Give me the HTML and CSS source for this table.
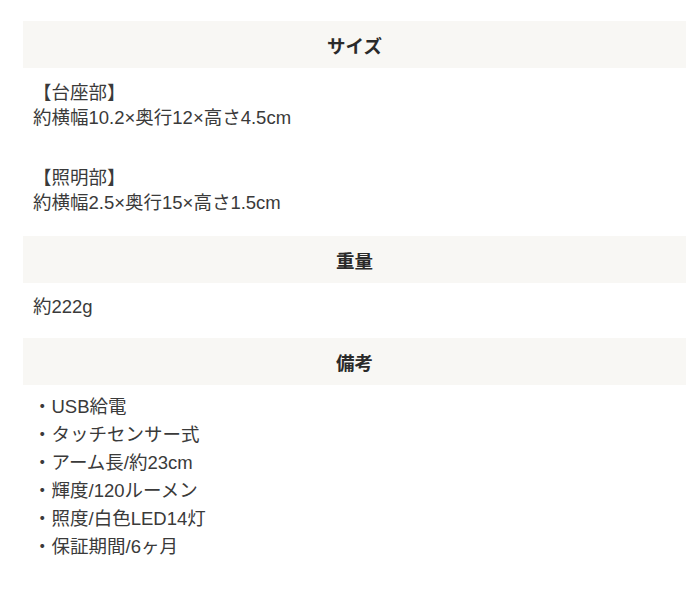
FILE: index.html
```html
<!DOCTYPE html>
<html lang="ja">
<head>
<meta charset="utf-8">
<title>仕様</title>
<link rel="stylesheet" href="styles.css">
</head>
<body>
<div class="spec">
  <section class="sec">
    <h2 class="band">サイズ</h2>
    <div class="body body-size">
      <p>【台座部】<br>約横幅10.2×奥行12×高さ4.5cm</p>
      <p>【照明部】<br>約横幅2.5×奥行15×高さ1.5cm</p>
    </div>
  </section>
  <section class="sec">
    <h2 class="band">重量</h2>
    <div class="body body-weight">
      <p>約222g</p>
    </div>
  </section>
  <section class="sec">
    <h2 class="band">備考</h2>
    <ul class="notes">
      <li>・USB給電</li>
      <li>・タッチセンサー式</li>
      <li>・アーム長/約23cm</li>
      <li>・輝度/120ルーメン</li>
      <li>・照度/白色LED14灯</li>
      <li>・保証期間/6ヶ月</li>
    </ul>
  </section>
</div>
</body>
</html>
```
FILE: styles.css
```css
html, body {
  margin: 0;
  padding: 0;
  background: #ffffff;
}
body {
  font-family: "Liberation Sans", "Noto Sans CJK JP", sans-serif;
  font-size: 18.5px;
  color: #3a3a3a;
}
.spec {
  padding: 21px 14px 0 23px;
}
.band {
  margin: 0;
  height: 47px;
  display: flex;
  align-items: center;
  justify-content: center;
  background: #f8f7f4;
  font-size: 18.5px;
  font-weight: bold;
  color: #2a2a2a;
}
.body {
  padding: 12px 10px 21px;
  line-height: 25px;
  display: flex;
  flex-direction: column;
  gap: 35px;
}
.body p {
  margin: 0;
}
.body-weight {
  padding: 11px 10px 19px;
}
.notes {
  list-style: none;
  margin: 0;
  padding: 8px 10px 0;
  line-height: 28px;
}
```
